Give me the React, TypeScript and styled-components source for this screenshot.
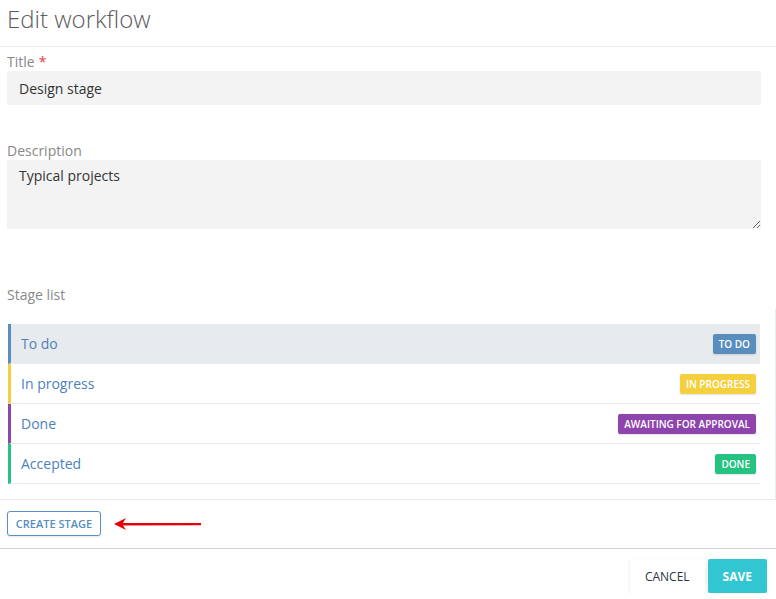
import React from 'react';
import styled, { createGlobalStyle } from 'styled-components';

const GlobalStyle = createGlobalStyle`
  body {
    margin: 0;
    background: #ffffff;
    font-family: "Open Sans", "Liberation Sans", sans-serif;
  }
`;

const Page = styled.div`
  width: 776px;
  display: flex;
  flex-direction: column;
`;

const Header = styled.header`
  height: 46px;
  border-bottom: 1px solid #e7ecf1;
  padding: 0 7px;
  display: flex;
  align-items: center;
`;

const Heading = styled.h1`
  margin: 0;
  margin-top: -10px;
  font-size: 24px;
  font-weight: 300;
  color: #5b5b60;
`;

const Section = styled.div`
  padding: 0 15px 0 7px;
  display: flex;
  flex-direction: column;
`;

const Group = styled.div<{ $gap: number }>`
  display: flex;
  flex-direction: column;
  margin-top: ${(p) => p.$gap}px;
`;

const Label = styled.label`
  font-size: 14px;
  line-height: 19px;
  color: #888888;
`;

const Required = styled.span`
  color: #e73d4a;
  margin-left: 4px;
`;

const Input = styled.input`
  height: 34px;
  box-sizing: border-box;
  border: none;
  background: #f3f3f3;
  padding: 0 12px;
  font-family: inherit;
  font-size: 14px;
  color: #333333;
  outline: none;
`;

const TextArea = styled.textarea`
  height: 69px;
  box-sizing: border-box;
  border: none;
  background: #f3f3f3;
  padding: 6px 12px;
  font-family: inherit;
  font-size: 14px;
  color: #333333;
  outline: none;
  resize: vertical;
`;

const StageBox = styled.div`
  margin-top: 5px;
  padding: 15px 15px 15px 8px;
  border-right: 1px solid #e7ecf1;
  border-bottom: 1px solid #e7ecf1;
  display: flex;
  flex-direction: column;
`;

const StageRow = styled.div<{ $color: string; $active?: boolean }>`
  height: 40px;
  box-sizing: border-box;
  display: flex;
  align-items: center;
  justify-content: space-between;
  border-left: 3px solid ${(p) => p.$color};
  border-bottom: 1px solid #e7ecf1;
  background: ${(p) => (p.$active ? '#e8ebee' : '#ffffff')};
  padding: 0 4px 0 10px;
  font-size: 14px;
  color: #4d80bd;
`;

const Badge = styled.span<{ $color: string }>`
  height: 20px;
  line-height: 20px;
  padding: 0 6px;
  border-radius: 2px;
  background: ${(p) => p.$color};
  color: #ffffff;
  font-size: 10px;
  font-weight: 600;
  box-shadow: 0 1px 2px rgba(0, 0, 0, 0.12);
`;

const CreateRow = styled.div`
  height: 48px;
  padding: 0 7px;
  display: flex;
  align-items: center;
  gap: 12px;
  border-bottom: 1px solid #d4d4d4;
`;

const OutlineButton = styled.button`
  height: 25px;
  width: 94px;
  margin-top: -2px;
  border: 1px solid #5b8fc7;
  border-radius: 3px;
  background: #ffffff;
  color: #578ebe;
  font-family: inherit;
  font-size: 11px;
  font-weight: 600;
  padding: 0;
  box-shadow: 0 1px 2px rgba(0, 0, 0, 0.1);
`;

const Footer = styled.footer`
  padding: 10px 9px 0 0;
  display: flex;
  justify-content: flex-end;
  gap: 3px;
`;

const FooterButton = styled.button<{ $primary?: boolean }>`
  height: 34px;
  padding: 0 15px;
  border: none;
  border-radius: 2px;
  font-family: inherit;
  font-size: 12px;
  font-weight: ${(p) => (p.$primary ? 700 : 400)};
  color: ${(p) => (p.$primary ? '#ffffff' : '#2f353b')};
  background: ${(p) => (p.$primary ? '#32c5d2' : '#ffffff')};
  box-shadow: 0 1px 3px rgba(0, 0, 0, 0.12);
`;

const Arrow = () => (
  <svg width="90" height="14" viewBox="0 0 90 14">
    <path d="M1 7 L13 1 L10 6 L88 6 L88 8.2 L10 8.5 L13 13 Z" fill="#e5000b" />
  </svg>
);

const stages = [
  { name: 'To do', color: '#578ebe', badge: 'TO DO', active: true },
  { name: 'In progress', color: '#f4d03f', badge: 'IN PROGRESS' },
  { name: 'Done', color: '#8e44ad', badge: 'AWAITING FOR APPROVAL' },
  { name: 'Accepted', color: '#26c281', badge: 'DONE' },
];

const App: React.FC = () => {
  return (
    <Page>
      <GlobalStyle />
      <Header>
        <Heading>Edit workflow</Heading>
      </Header>

      <Section>
        <Group $gap={5}>
          <Label>
            Title<Required>*</Required>
          </Label>
          <Input defaultValue="Design stage" />
        </Group>
        <Group $gap={36}>
          <Label>Description</Label>
          <TextArea defaultValue="Typical projects" />
        </Group>
        <Group $gap={56}>
          <Label>Stage list</Label>
        </Group>
      </Section>

      <StageBox>
        {stages.map((s) => (
          <StageRow key={s.name} $color={s.color} $active={s.active}>
            {s.name}
            <Badge $color={s.color}>{s.badge}</Badge>
          </StageRow>
        ))}
      </StageBox>

      <CreateRow>
        <OutlineButton>CREATE STAGE</OutlineButton>
        <Arrow />
      </CreateRow>

      <Footer>
        <FooterButton>CANCEL</FooterButton>
        <FooterButton $primary>SAVE</FooterButton>
      </Footer>
    </Page>
  );
};

export default App;
